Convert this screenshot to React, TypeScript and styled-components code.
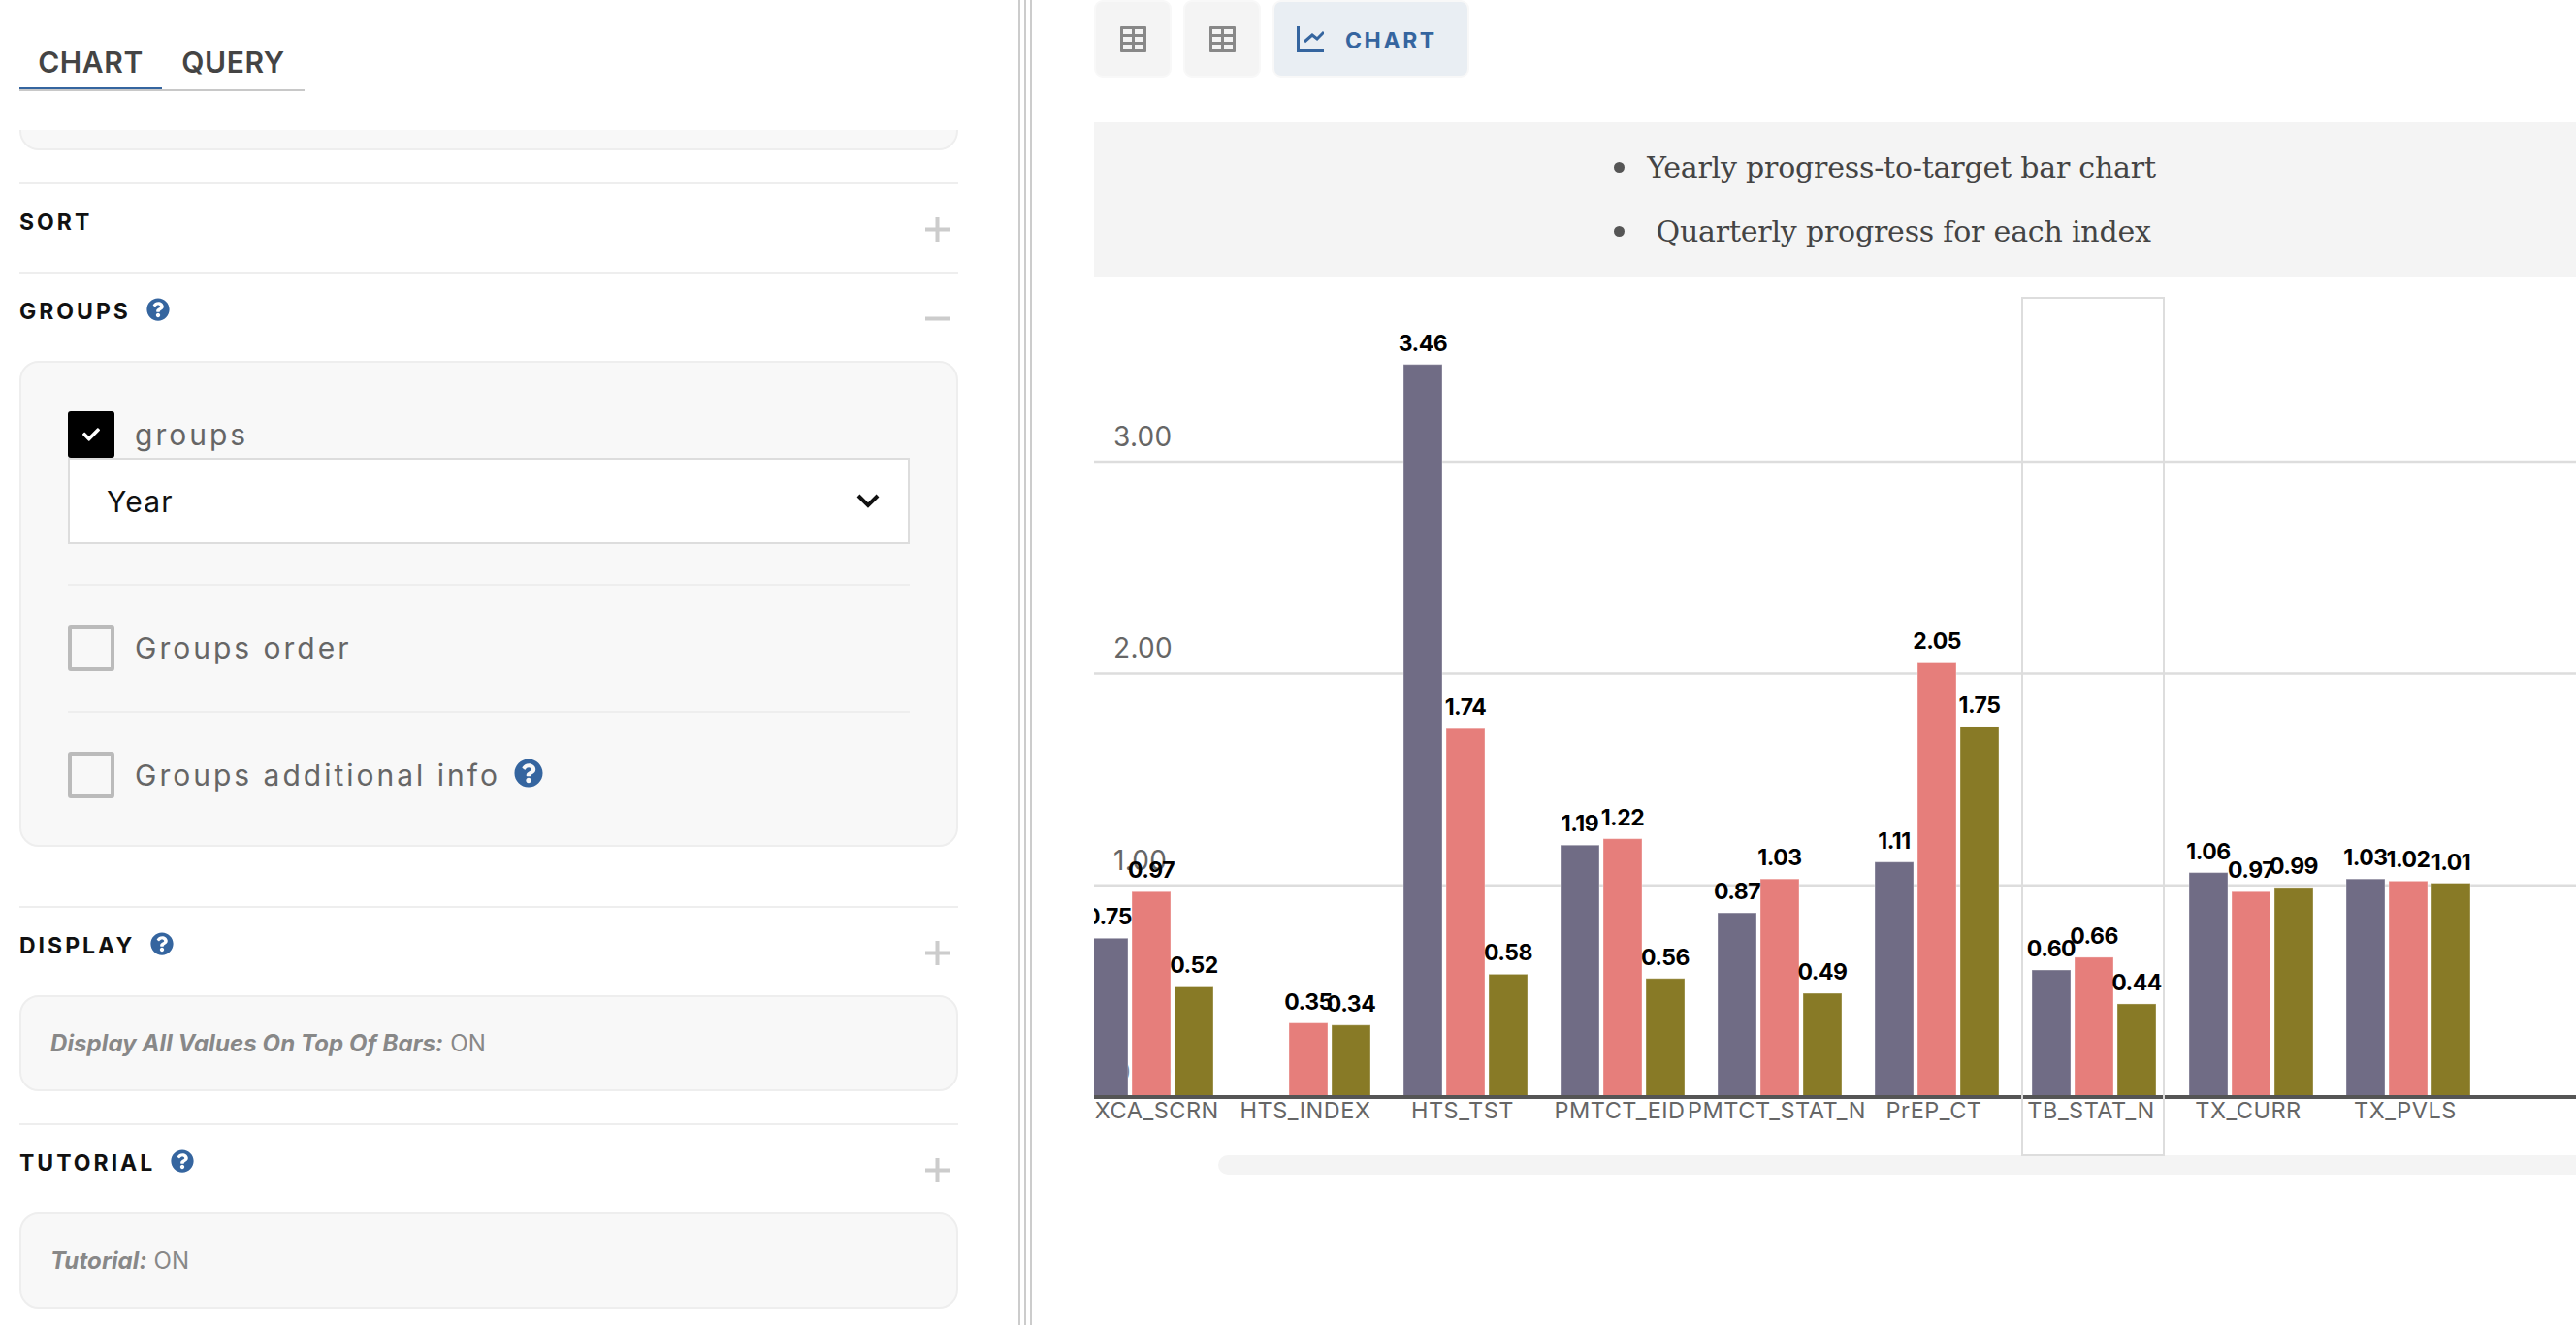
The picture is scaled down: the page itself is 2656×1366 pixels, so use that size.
import React from 'react'
import styled, { createGlobalStyle } from 'styled-components'
import { FaCheck, FaQuestionCircle } from 'react-icons/fa'

const BLUE = '#35659f'

const GlobalStyle = createGlobalStyle`
  html, body {
    margin: 0;
    background: #fff;
    overflow: hidden;
  }
  body {
    font-family: Inter, "Noto Sans", sans-serif;
  }
`

const Page = styled.div`
  width: 2656px;
  height: 1366px;
  display: flex;
  overflow: hidden;
`

const Sidebar = styled.aside`
  width: 1050px;
  flex: none;
  box-sizing: border-box;
  padding: 40px 62px 0 20px;
  display: flex;
  flex-direction: column;
  overflow: hidden;
`

const Tabs = styled.div`
  display: flex;
  flex: none;
`

const Tab = styled.div<{ $active?: boolean }>`
  width: 147px;
  height: 54px;
  box-sizing: border-box;
  text-align: center;
  font-size: 30px;
  line-height: 48px;
  font-weight: 600;
  letter-spacing: 0.6px;
  color: #444;
  border-bottom: 2px solid #c8c8c8;
  box-shadow: ${p => (p.$active ? `inset 0 -2px 0 ${BLUE}` : 'none')};
`

const Scroller = styled.div`
  margin-top: 40px;
  flex: 1;
  overflow: hidden;
`

const Panel = styled.div`
  box-sizing: border-box;
  background: #f8f8f8;
  border: 2px solid #eee;
  border-radius: 20px;
`

const PanelStub = styled(Panel)`
  height: 21px;
  border-top: none;
  border-radius: 0 0 20px 20px;
  margin-bottom: 33px;
`

const GroupsPanel = styled(Panel)`
  padding: 50px 48px 48px;
  margin-bottom: 61px;
`

const SummaryPanel = styled(Panel)`
  height: 99px;
  padding: 0 30px;
  margin-bottom: 33px;
  display: flex;
  align-items: center;
  font-size: 24px;
  letter-spacing: 0.1px;
  color: #888;

  b {
    font-style: italic;
    font-weight: 700;
    margin-right: 7px;
  }
`

const Section = styled.section`
  border-top: 2px solid #eee;
`

const SectionHeader = styled.div`
  height: 90px;
  display: flex;
  justify-content: space-between;
  padding-right: 9px;
`

const SectionTitle = styled.div`
  display: flex;
  align-items: flex-start;
  gap: 16px;
  padding-top: 25px;
  font-size: 23px;
  line-height: 28px;
  font-weight: 700;
  letter-spacing: 3px;
  color: #111;
`

const HelpIcon = styled(FaQuestionCircle)<{ $size?: number }>`
  flex: none;
  color: ${BLUE};
  width: ${p => p.$size ?? 24}px;
  height: ${p => p.$size ?? 24}px;
`

const ToggleIcon = styled.svg`
  width: 25px;
  height: 25px;
  margin-top: 34px;
  fill: #ccc;
`

const CheckRow = styled.div`
  display: flex;
  align-items: center;
  height: 48px;
  gap: 21px;
  font-size: 30px;
  letter-spacing: 3px;
  color: #666;
`

const CheckBox = styled.span<{ $checked?: boolean }>`
  width: 48px;
  height: 48px;
  flex: none;
  box-sizing: border-box;
  border-radius: 3px;
  display: flex;
  align-items: center;
  justify-content: center;
  color: #fff;
  background: ${p => (p.$checked ? '#000' : 'transparent')};
  border: ${p => (p.$checked ? 'none' : '4px solid #bbb')};

  svg {
    width: 18px;
    height: 18px;
  }
`

const SelectBox = styled.div`
  height: 89px;
  box-sizing: border-box;
  background: #fff;
  border: 2px solid #ddd;
  padding: 0 29px 0 38px;
  display: flex;
  align-items: center;
  justify-content: space-between;
  font-size: 30px;
  letter-spacing: 1.2px;
  color: #111;
`

const Chevron = styled.svg`
  width: 24px;
  height: 15px;
  fill: none;
  stroke: #111;
  stroke-width: 4;
`

const InnerRule = styled.div`
  border-top: 2px solid #eee;
  margin: 41px 0 40px;
`

const InlineHelp = styled.span`
  display: inline-flex;
  margin: -4px 0 0 -7px;
`

const Splitter = styled.div`
  flex: none;
  width: 12px;
  display: flex;
  gap: 4px;

  i {
    width: 2px;
    height: 100%;
    background: #ccc;
  }
`

const Main = styled.main`
  flex: 1;
  min-width: 0;
  padding-left: 64px;
  border-left: 2px solid #ccc;
`

const Toolbar = styled.div`
  height: 80px;
  display: flex;
  gap: 12px;
`

const IconButton = styled.div`
  box-sizing: border-box;
  width: 80px;
  height: 80px;
  border: 2px solid #f8f8f8;
  border-radius: 9px;
  background: #f4f4f4;
  color: #888;
  display: flex;
  align-items: center;
  justify-content: center;

  svg {
    width: 27px;
    height: 27px;
    flex: none;
  }
`

const ViewButton = styled.div`
  box-sizing: border-box;
  width: 203px;
  height: 80px;
  border: 2px solid #f8f8f8;
  border-radius: 9px;
  background: #e9eef3;
  color: ${BLUE};
  padding-left: 23px;
  display: flex;
  align-items: center;
  gap: 22px;
  font-size: 23px;
  font-weight: 700;
  letter-spacing: 2.6px;

  svg {
    width: 28px;
    height: 27px;
    flex: none;
  }

  span {
    margin-top: 4px;
  }
`

const NotesBand = styled.div`
  margin-top: 46px;
  height: 160px;
  box-sizing: border-box;
  padding-left: 103px;
  background: #f4f4f4;
  display: flex;
  align-items: center;
  justify-content: center;
`

const NotesList = styled.ul`
  margin: 0;
  padding: 0;
  list-style: none;
  font-family: "DejaVu Serif", serif;
  font-size: 30px;
  line-height: 66px;
  letter-spacing: -0.2px;
  color: #444;

  li::before {
    content: '';
    display: inline-block;
    width: 11px;
    height: 11px;
    margin-right: 23px;
    border-radius: 50%;
    background: #555;
    vertical-align: 5px;
  }
`

const ChartFrame = styled.svg`
  display: block;
  width: 1528px;
  height: 906px;
`

const GridLine = styled.line`
  stroke: #ddd;
  stroke-width: 2.5;
`

const BaseLine = styled.line`
  stroke: #555;
  stroke-width: 4;
`

const AxisLabel = styled.text`
  font-size: 28px;
  font-weight: 400;
  letter-spacing: 0.3px;
  fill: #666;
`

const BarValue = styled.text`
  font-size: 23px;
  font-weight: 700;
  letter-spacing: -0.5px;
  fill: #000;
  text-anchor: middle;
`

const Category = styled.text`
  font-size: 23.5px;
  font-weight: 400;
  letter-spacing: 0.5px;
  fill: #666;
  text-anchor: middle;
`

const Bar = styled.rect`
  stroke: rgba(255, 255, 255, 0.35);
  stroke-width: 1;
`

const HoverBox = styled.rect`
  fill: none;
  stroke: #ddd;
  stroke-width: 2;
`

const ScrollThumb = styled.div`
  margin: -1px 0 0 128px;
  height: 20px;
  background: #f4f4f4;
  border-radius: 14px 0 0 14px;
`

const ORIGIN_X = 1128
const ORIGIN_Y = 286
const ZERO_Y = 1131 - ORIGIN_Y
const UNIT = 218.3
const COLORS = ['#706c85', '#e67e7b', '#887a26']

const GROUPS: { name: string; values: (number | null)[] }[] = [
  { name: 'CXCA_SCRN', values: [0.75, 0.97, 0.52] },
  { name: 'HTS_INDEX', values: [null, 0.35, 0.34] },
  { name: 'HTS_TST', values: [3.46, 1.74, 0.58] },
  { name: 'PMTCT_EID', values: [1.19, 1.22, 0.56] },
  { name: 'PMTCT_STAT_N', values: [0.87, 1.03, 0.49] },
  { name: 'PrEP_CT', values: [1.11, 2.05, 1.75] },
  { name: 'TB_STAT_N', values: [0.6, 0.66, 0.44] },
  { name: 'TX_CURR', values: [1.06, 0.97, 0.99] },
  { name: 'TX_PVLS', values: [1.03, 1.02, 1.01] },
]

const TableIcon = () => (
  <svg viewBox="0 0 27 27">
    <path
      fill="currentColor"
      fillRule="evenodd"
      d="M1 0h25a1 1 0 0 1 1 1v25a1 1 0 0 1-1 1H1a1 1 0 0 1-1-1V1a1 1 0 0 1 1-1zM3 3v5h9V3zM15 3v5h9V3zM3 11v5h9v-5zM15 11v5h9v-5zM3 19v5h9v-5zM15 19v5h9v-5z"
    />
  </svg>
)

const ChartIcon = () => (
  <svg viewBox="0 0 28 27" fill="none" stroke="currentColor" strokeWidth="3">
    <path d="M1.5 0v25.5H28" />
    <path d="M8 16l8-7 5 4 7-7" />
  </svg>
)

const Toggle = ({ open }: { open?: boolean }) => (
  <ToggleIcon viewBox="0 0 25 25">
    <rect x="0" y="10.5" width="25" height="4" />
    {!open && <rect x="10.5" y="0" width="4" height="25" />}
  </ToggleIcon>
)

const Chart = () => (
  <ChartFrame viewBox="0 0 1528 906">
    {[3, 2, 1].map(v => {
      const y = ZERO_Y - v * UNIT
      return <GridLine key={v} x1={0} x2={1528} y1={y} y2={y} />
    })}
    {[3, 2, 1, 0].map(v => (
      <AxisLabel key={v} x={20} y={ZERO_Y - v * UNIT - 16}>
        {v.toFixed(2)}
      </AxisLabel>
    ))}
    {GROUPS.map((g, i) => {
      const left = 1123 + 162 * i - ORIGIN_X
      return (
        <g key={g.name}>
          {g.values.map((v, j) =>
            v === null ? null : (
              <Bar
                key={j}
                x={left + 44 * j}
                y={ZERO_Y - v * UNIT}
                width={40}
                height={v * UNIT}
                fill={COLORS[j]}
              />
            ),
          )}
        </g>
      )
    })}
    {GROUPS.map((g, i) => {
      const left = 1123 + 162 * i - ORIGIN_X
      return (
        <g key={g.name}>
          {g.values.map((v, j) =>
            v === null ? null : (
              <BarValue key={j} x={left + 44 * j + 20} y={ZERO_Y - v * UNIT - 14}>
                {v.toFixed(2)}
              </BarValue>
            ),
          )}
          <Category x={left + 61} y={ZERO_Y + 22}>
            {g.name}
          </Category>
        </g>
      )
    })}
    <BaseLine x1={0} x2={1528} y1={ZERO_Y} y2={ZERO_Y} />
    <HoverBox x={2085 - ORIGIN_X} y={307 - ORIGIN_Y} width={146} height={884} />
  </ChartFrame>
)

export default function App() {
  return (
    <Page>
      <GlobalStyle />
      <Sidebar>
        <Tabs>
          <Tab $active>CHART</Tab>
          <Tab>QUERY</Tab>
        </Tabs>
        <Scroller>
          <PanelStub />
          <Section>
            <SectionHeader>
              <SectionTitle>SORT</SectionTitle>
              <Toggle />
            </SectionHeader>
          </Section>
          <Section>
            <SectionHeader>
              <SectionTitle>
                GROUPS <HelpIcon />
              </SectionTitle>
              <Toggle open />
            </SectionHeader>
            <GroupsPanel>
              <CheckRow>
                <CheckBox $checked>
                  <FaCheck />
                </CheckBox>
                groups
              </CheckRow>
              <SelectBox>
                Year
                <Chevron viewBox="0 0 24 15">
                  <path d="M2 2l10 10L22 2" />
                </Chevron>
              </SelectBox>
              <InnerRule />
              <CheckRow>
                <CheckBox />
                Groups order
              </CheckRow>
              <InnerRule />
              <CheckRow>
                <CheckBox />
                Groups additional info
                <InlineHelp>
                  <HelpIcon $size={30} />
                </InlineHelp>
              </CheckRow>
            </GroupsPanel>
          </Section>
          <Section>
            <SectionHeader>
              <SectionTitle>
                DISPLAY <HelpIcon />
              </SectionTitle>
              <Toggle />
            </SectionHeader>
            <SummaryPanel>
              <span>
                <b>Display All Values On Top Of Bars:</b>ON
              </span>
            </SummaryPanel>
          </Section>
          <Section>
            <SectionHeader>
              <SectionTitle>
                TUTORIAL <HelpIcon />
              </SectionTitle>
              <Toggle />
            </SectionHeader>
            <SummaryPanel>
              <span>
                <b>Tutorial:</b>ON
              </span>
            </SummaryPanel>
          </Section>
        </Scroller>
      </Sidebar>
      <Splitter>
        <i />
        <i />
      </Splitter>
      <Main>
        <Toolbar>
          <IconButton>
            <TableIcon />
          </IconButton>
          <IconButton>
            <TableIcon />
          </IconButton>
          <ViewButton>
            <ChartIcon />
            <span>CHART</span>
          </ViewButton>
        </Toolbar>
        <NotesBand>
          <NotesList>
            <li>Yearly progress-to-target bar chart</li>
            <li>&nbsp;Quarterly progress for each index</li>
          </NotesList>
        </NotesBand>
        <Chart />
        <ScrollThumb />
      </Main>
    </Page>
  )
}
